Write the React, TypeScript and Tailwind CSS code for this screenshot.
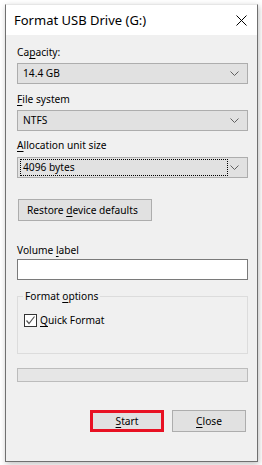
import React from "react";

const font = { fontFamily: '"Noto Sans", "Liberation Sans", sans-serif' };

function Chevron() {
  return (
    <svg width="9" height="6" viewBox="0 0 9 6" className="shrink-0">
      <path d="M0.5 0.5 L4.5 4.5 L8.5 0.5" fill="none" stroke="#606060" strokeWidth="1" />
    </svg>
  );
}

function Combo({ value, focused }: { value: string; focused?: boolean }) {
  return (
    <div className="flex h-[21px] w-[231px] items-center border border-[#adadad] bg-[#e1e1e1] pl-[2px] pr-[8px]">
      <div
        className={`flex h-[17px] w-[208px] items-center pl-[2px] ${
          focused ? "border border-dotted border-black" : "border border-transparent"
        }`}
      >
        {value}
      </div>
      <div className="flex flex-1 justify-end">
        <Chevron />
      </div>
    </div>
  );
}

function U({ children }: { children: React.ReactNode }) {
  return <span className="underline underline-offset-[2px]">{children}</span>;
}

export default function App() {
  return (
    <div className="min-h-screen bg-white pt-[4px] pl-[5px] text-[10.2px] leading-[15px] text-black" style={font}>
      <div className="flex h-[458px] w-[253px] flex-col border border-[#707070] border-t-[#e6e6e6] shadow-[1px_2px_6px_rgba(0,0,0,0.25)]">
        {/* title bar */}
        <div className="flex h-[30px] items-center justify-between bg-white pl-[8px] pr-[10px]">
          <span className="text-[13px]">Format USB Drive (G:)</span>
          <svg width="11" height="11" viewBox="0 0 11 11">
            <path d="M0.5 0.5 L10.5 10.5 M10.5 0.5 L0.5 10.5" stroke="#000" strokeWidth="1" />
          </svg>
        </div>

        {/* body */}
        <div className="flex flex-1 flex-col bg-[#f0f0f0] pl-[11px] pt-[10px]">
          <div>
            Ca<U>p</U>acity:
          </div>
          <div className="mt-[3px]">
            <Combo value="14.4 GB" />
          </div>

          <div className="mt-[8px]">
            <U>F</U>ile system
          </div>
          <div className="mt-[3px]">
            <Combo value="NTFS" />
          </div>

          <div className="mt-[7px]">
            <U>A</U>llocation unit size
          </div>
          <div className="mt-[4px]">
            <Combo value="4096 bytes" focused />
          </div>

          <button className="mt-[21px] ml-[1px] flex h-[22px] w-[134px] items-center border border-[#adadad] bg-[#e1e1e1] pl-[8px]">
            <span className="whitespace-nowrap">
              Restore <U>d</U>evice defaults
            </span>
          </button>

          <div className="mt-[22px]">
            Volume <U>l</U>abel
          </div>
          <div className="mt-[1px] h-[21px] w-[231px] border border-[#7a7a7a] bg-white" />

          {/* group box */}
          <div className="mt-[16px] h-[58px] w-[231px] border border-[#dcdcdc]">
            <div className="-mt-[8px] ml-[5px] w-fit bg-[#f0f0f0] px-[2px]">
              Format <U>o</U>ptions
            </div>
            <div className="mt-[9px] ml-[6px] flex items-center gap-[3px]">
              <div className="flex h-[13px] w-[13px] items-center justify-center border border-[#333] bg-white">
                <svg width="11" height="11" viewBox="0 0 11 11">
                  <path d="M1.5 5.5 L4 8.5 L9.5 1.5" fill="none" stroke="#555" strokeWidth="1.2" />
                </svg>
              </div>
              <span>
                <U>Q</U>uick Format
              </span>
            </div>
          </div>

          {/* progress */}
          <div className="mt-[14px] h-[14px] w-[231px] border border-[#bcbcbc] bg-[#e6e6e6]" />

          {/* buttons */}
          <div className="mt-[28px] flex w-[229px] justify-end gap-[8px]">
            <button className="flex h-[22px] w-[74px] items-center justify-center border-[3px] border-[#e81123] bg-[#e1e1e1]">
              <span>
                <U>S</U>tart
              </span>
            </button>
            <button className="flex h-[22px] w-[74px] items-center justify-center border border-[#adadad] bg-[#e1e1e1]">
              <span>
                <U>C</U>lose
              </span>
            </button>
          </div>
        </div>
      </div>
    </div>
  );
}
